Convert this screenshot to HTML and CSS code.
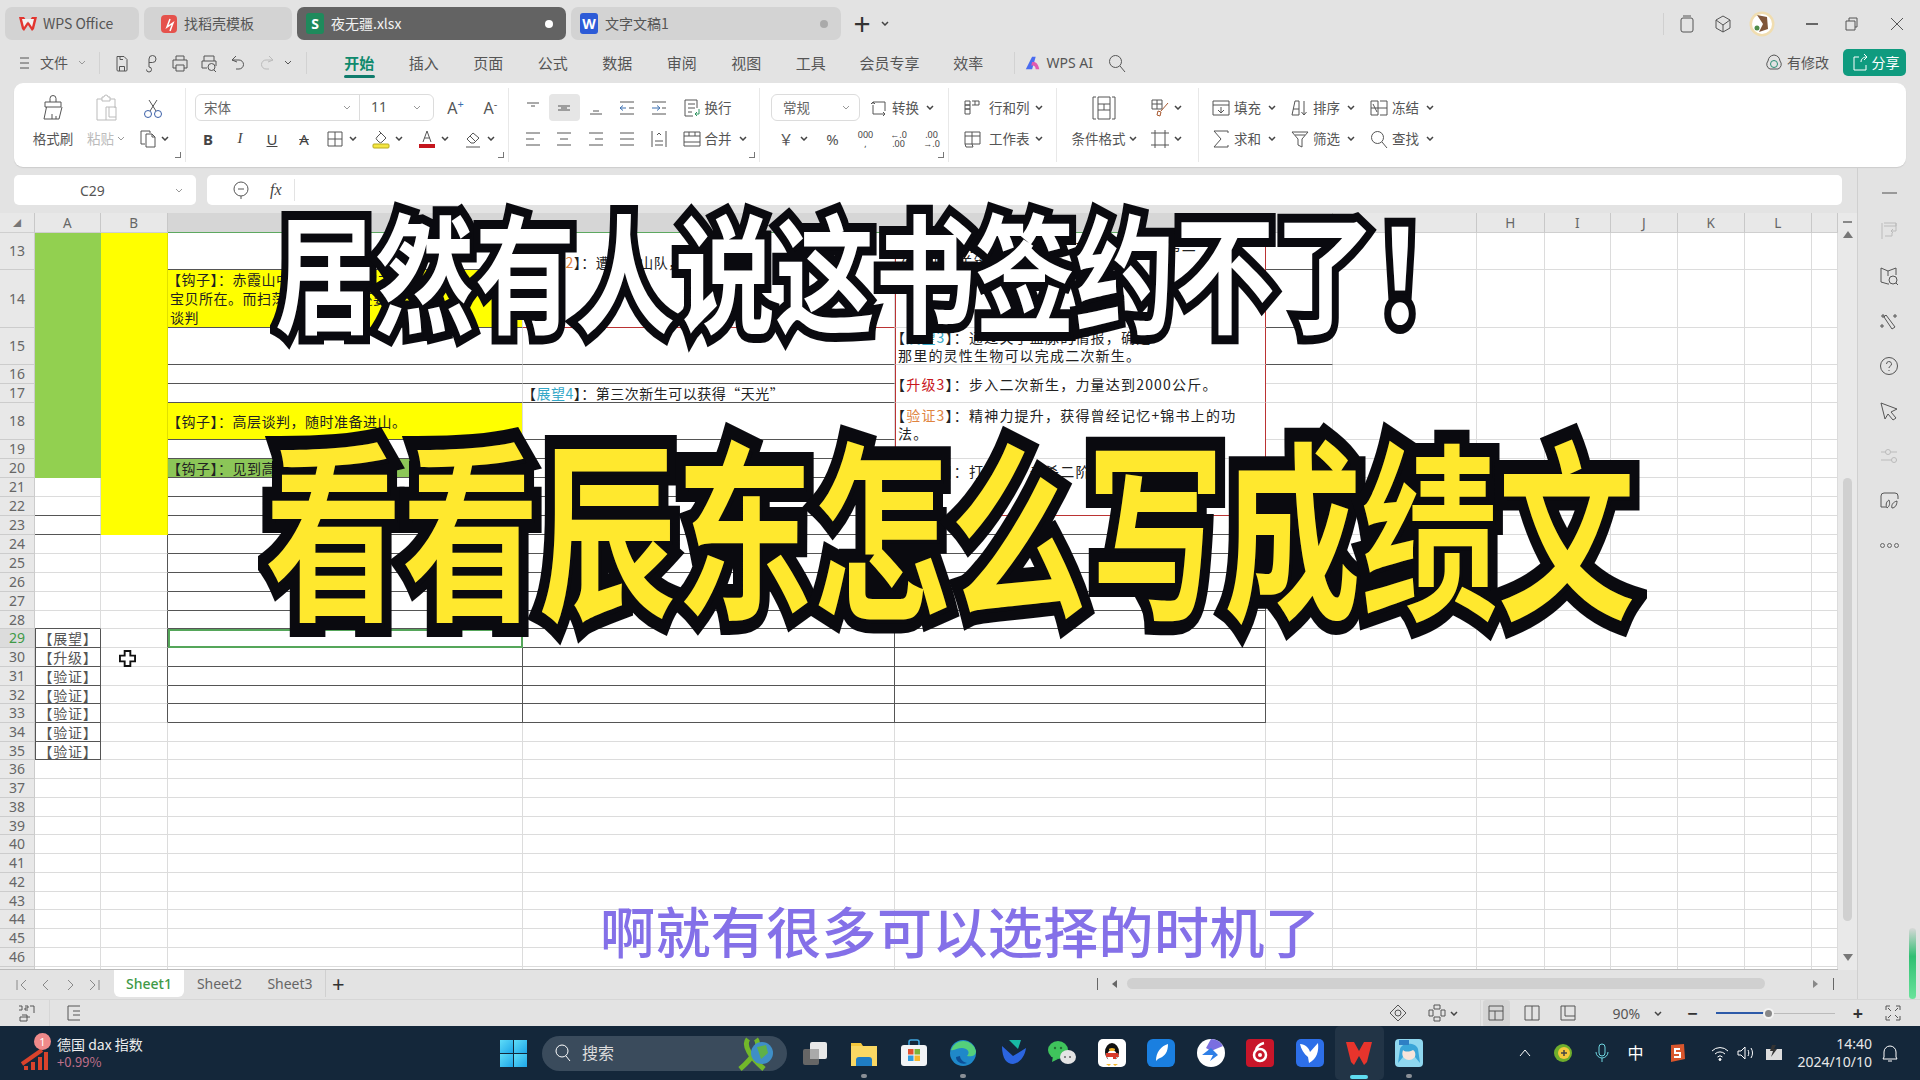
FILE: index.html
```html
<!DOCTYPE html>
<html lang="zh-CN">
<head>
<meta charset="utf-8">
<title>夜无疆.xlsx - WPS Office</title>
<link rel="stylesheet" href="styles.css">
</head>
<body>
<svg class="defs" aria-hidden="true">
<symbol id="ch" viewBox="0 0 8 5"><path d="M1 1l3 3 3-3"/></symbol>
<symbol id="save" viewBox="0 0 20 20"><path d="M5 3.500h7l3 3v10.500a1 1 0 0 1-1 1H6a1 1 0 0 1-1-1zM7.500 18v-4.500h5V18M8 3.500v3h3"/></symbol>
<symbol id="export" viewBox="0 0 20 20"><path d="M8 14V6a3.500 3.500 0 1 1 3.500 3.500H8M8 14a2.500 2.500 0 1 1-2.500 2.500"/></symbol>
<symbol id="print" viewBox="0 0 20 20"><path d="M6 7V3h8v4M3 7h14v8h-3M6 15H3V7M6 12h8v6H6z"/></symbol>
<symbol id="preview" viewBox="0 0 20 20"><path d="M5 8V3h10v5M3 8h14v5M3 8v7h5"/><circle cx="12.500" cy="14" r="3.500"/><path d="M15 17l2 2"/></symbol>
<symbol id="undo" viewBox="0 0 20 20"><path d="M4 7l4-4M4 7l5 2M4 7h7a4.500 4.500 0 0 1 0 9H8"/></symbol>
<symbol id="redo" viewBox="0 0 20 20"><path d="M16 7l-4-4M16 7l-5 2M16 7H9a4.500 4.500 0 0 0 0 9h3"/></symbol>
<symbol id="brush" viewBox="0 0 28 28"><path d="M11 8V4.500a3 3 0 0 1 6 0V8M6 8h16v5H6zM7.500 13L5 25h15l3-12M13 25v-5M17 25v-3"/></symbol>
<symbol id="paste" viewBox="0 0 28 28"><path d="M10 5H5v21h9M18 5h5v9M10 5V3h2a2 2 0 0 1 4 0h2v4h-8zM14 13h10v13H14zM17 13v10h7"/></symbol>
<symbol id="cut" viewBox="0 0 22 22"><circle cx="6" cy="17" r="3.500" stroke="#3a5fa8"/><circle cx="16" cy="17" r="3.500" stroke="#3a5fa8"/><path d="M8 14L15 3M14 14L7 3"/></symbol>
<symbol id="copy" viewBox="0 0 20 20"><path d="M12 4V2H3v13h4M8 5h6l3 3v10H8zM14 5v3h3"/></symbol>
<symbol id="border" viewBox="0 0 20 20"><path d="M3 3h14v14H3zM10 3v14M3 10h14"/></symbol>
<symbol id="fill" viewBox="0 0 20 20"><path d="M6 8l4-4 5 5-4 4a2 2 0 0 1-3 0l-2-2a2 2 0 0 1 0-3zM8 2l2 2"/><rect x="2" y="15" width="16" height="4" rx="1" fill="#f5e642" stroke="#b8ab20"/></symbol>
<symbol id="color" viewBox="0 0 20 20"><path d="M6 13l4-11 4 11M7.500 9h5"/><rect x="2" y="15" width="16" height="4" fill="#c5161d" stroke="none"/></symbol>
<symbol id="erase" viewBox="0 0 20 20"><path d="M4 10l6-6 6 5-5 5H8zM7 7l5 5M3 18h14"/></symbol>
<symbol id="a1" viewBox="0 0 20 20"><path d="M4 5h12M8 8h4"/></symbol>
<symbol id="a2" viewBox="0 0 20 20"><path d="M4 8h12M4 12h12M7 10h6"/></symbol>
<symbol id="a3" viewBox="0 0 20 20"><path d="M4 16h12M7 13h6"/></symbol>
<symbol id="a4" viewBox="0 0 20 20"><path d="M3 4h14M3 16h14M12 10h5"/><path d="M3 10h6M6 7.500L3 10l3 2.500" stroke="#3a6fb0"/></symbol>
<symbol id="a5" viewBox="0 0 20 20"><path d="M3 4h14M3 16h14M13 10h4"/><path d="M3 10h7M8 7.500l3 2.500-3 2.500" stroke="#3a6fb0"/></symbol>
<symbol id="wrap" viewBox="0 0 20 20"><path d="M15 10V2H3v16h8M6 6h7M6 10h7M6 14h4"/><path d="M17 11v5h-4M15 14l-2 2 2 2" stroke="#2f9460"/></symbol>
<symbol id="l1" viewBox="0 0 20 20"><path d="M3 4h14M3 10h8M3 16h14"/></symbol>
<symbol id="l2" viewBox="0 0 20 20"><path d="M3 4h14M6 10h8M3 16h14"/></symbol>
<symbol id="l3" viewBox="0 0 20 20"><path d="M3 4h14M9 10h8M3 16h14"/></symbol>
<symbol id="l4" viewBox="0 0 20 20"><path d="M3 4h14M3 10h14M3 16h14"/></symbol>
<symbol id="l5" viewBox="0 0 20 20"><path d="M3 2v16M17 2v16M6 12h8M6 16h8M8 6l2-2 2 2" /></symbol>
<symbol id="merge" viewBox="0 0 20 20"><path d="M2 3h16v14H2zM2 7h16M2 13h16M7 3v4M13 3v4"/></symbol>
<symbol id="conv" viewBox="0 0 20 20"><path d="M4 6V4h12v9M4 7v9h12M2 6l2-2 2 2" /><path d="M14 14l2 2-2 2" /></symbol>
<symbol id="rc" viewBox="0 0 20 20"><path d="M3 3h5v4H3zM3 7h5v4H3zM3 11h5v5H3zM10 3h7v4h-7M13 3v4"/></symbol>
<symbol id="ws" viewBox="0 0 20 20"><path d="M3 3h15v12H3zM3 7h15M10 3v12M3 15l1 3h7l-1-3" /></symbol>
<symbol id="cf" viewBox="0 0 28 28"><path d="M6 3H3v22h3M22 3h3v22h-3M8 3h12v22H8zM8 10h12M8 16h12M14 10v6"/></symbol>
<symbol id="cs" viewBox="0 0 20 20"><path d="M2 2h10v9H2zM7 2v9M2 6h10"/><path d="M18 5l-7 8M8 13l3 1-1 4-3-1z" stroke="#a8582f"/></symbol>
<symbol id="frm" viewBox="0 0 20 20"><path d="M5 1v18M15 1v18M1 4h18M1 16h18"/></symbol>
<symbol id="fl" viewBox="0 0 20 20"><path d="M2 3h16v14H2zM2 7h16M10 9v6M7 12l3 3 3-3"/></symbol>
<symbol id="sort" viewBox="0 0 20 20"><path d="M2 17L5 3h4v14zM3 11h6M14 3v14M11.500 14l2.500 3 2.500-3" /></symbol>
<symbol id="frz" viewBox="0 0 20 20"><path d="M2 3h7v14H2zM11 3h7v14h-7M2 10h16M4 6l4 8"/></symbol>
<symbol id="sum" viewBox="0 0 20 20"><path d="M17 4V2H3l7 8-7 8h14v-2"/></symbol>
<symbol id="flt" viewBox="0 0 20 20"><path d="M2 3h16l-6 7v8l-4-2v-6zM5 6h10"/></symbol>
<symbol id="find" viewBox="0 0 20 20"><circle cx="8.500" cy="8.500" r="6"/><path d="M13 13l5 6"/></symbol>
<symbol id="zoomf" viewBox="0 0 20 20"><circle cx="10" cy="9" r="7"/><path d="M7 9h6M10 16v3"/></symbol>
<symbol id="gr" viewBox="0 0 22 22"><path d="M4 3v16M6 6h12v-3M6 3h12M18 3v8h-5M15 9l-2 2 2 2M7 16h7v-3"/></symbol>
<symbol id="bk" viewBox="0 0 22 22"><path d="M3 3l7 3 8-3v7M3 3v14l7 2h1M10 6v5"/><circle cx="15" cy="15" r="4"/><path d="M18 18l2 2"/></symbol>
<symbol id="wnd" viewBox="0 0 22 22"><path d="M8 5l9 12-3 2L6 7zM5 4v4M3 6h4M17 4v4M15 6h4M4 14v4M2 16h4"/></symbol>
<symbol id="hlp" viewBox="0 0 22 22"><circle cx="11" cy="11" r="8.500"/><path d="M8.500 9a2.500 2.500 0 1 1 3.500 2.300c-.7.400-1 .8-1 1.700M11 15v1"/></symbol>
<symbol id="ptr" viewBox="0 0 22 22"><path d="M3 3l16 6-6 3 5 6-3 2-5-6-3 5z"/></symbol>
<symbol id="sld" viewBox="0 0 22 22"><path d="M3 7h5M13 7h6M3 15h11M19 15h-1"/><circle cx="10" cy="7" r="2.500"/><circle cx="16" cy="15" r="2.500"/></symbol>
<symbol id="eco" viewBox="0 0 22 22"><path d="M3 9V6a3 3 0 0 1 3-3h11a3 3 0 0 1 3 3v3M3 9v8h5M9 18c-2-4 0-7 2-8 1 3 1 6-2 8zM14 18c-1-3 1-6 5-7 0 4-2 7-5 7z"/></symbol>
<symbol id="eye" viewBox="0 0 20 20"><path d="M10 2l8 8-8 8-8-8z"/><circle cx="10" cy="10" r="3"/></symbol>
<symbol id="cross" viewBox="0 0 20 20"><path d="M7 2h6v4H7zM7 14h6v4H7zM2 7h4v6H2zM14 7h4v6h-4z"/></symbol>
<symbol id="v1" viewBox="0 0 20 20"><path d="M3 3h14v14H3zM3 8h14M9 8v9"/></symbol>
<symbol id="v2" viewBox="0 0 20 20"><path d="M3 3h14v14H3zM10 3v14"/></symbol>
<symbol id="v3" viewBox="0 0 20 20"><path d="M3 3h14v14H3zM7 3v10h10"/></symbol>
<symbol id="full" viewBox="0 0 20 20"><path d="M3 7V3h4M13 3h4v4M17 13v4h-4M7 17H3v-4M5 5l3 3M15 5l-3 3M5 15l3-3M15 15l-3-3"/></symbol>
<symbol id="js" viewBox="0 0 20 20"><path d="M5 12h5v6H3v-4h10M13 3h4v7M2 3h3v4H2M8 3h3v2H8v2h3"/></symbol>
<symbol id="pg" viewBox="0 0 20 20"><path d="M16 3H4v14h12M9 8h7M9 12h7"/></symbol>
<symbol id="cube" viewBox="0 0 20 20"><path d="M10 2l7 4v8l-7 4-7-4V6zM3 6l7 5 7-5M10 11v7"/></symbol>
<symbol id="copyw" viewBox="0 0 20 20"><rect x="4" y="4" width="12" height="14" rx="2"/><path d="M6 2h8"/></symbol>
</svg>

<div class="tabs">
  <div class="tab t1"><svg class="ti" viewBox="0 0 20 20"><path d="M1 3h5l4 6 4-6h5l-3 12-2 2-4-6-4 6-2-2z" fill="#e2352f"/><path d="M4 5l2 8 4-6 4 6 2-8z" fill="#f2f2f2"/></svg><span>WPS Office</span></div>
  <div class="tab t2"><svg class="ti" viewBox="0 0 20 20"><rect x="2" y="1" width="16" height="18" rx="4" fill="#e5524c"/><path d="M11 5l-3 8 6-4-3 8" fill="none" stroke="#fff" stroke-width="1.500"/></svg><span>找稻壳模板</span></div>
  <div class="tab t3 on"><b class="badge sx">S</b><span>夜无疆.xlsx</span><i class="dot"></i></div>
  <div class="tab t4"><b class="badge wd">W</b><span>文字文稿1</span><i class="dot dim"></i></div>
  <div class="plus">+</div>
  <svg class="ch dark tabch"><use href="#ch"/></svg>
  <div class="winbtns">
    <i class="wdiv"></i>
    <svg class="ic w20"><use href="#copyw"/></svg>
    <svg class="ic w20"><use href="#cube"/></svg>
    <svg class="avatar" viewBox="0 0 26 26"><circle cx="13" cy="13" r="12.500" fill="#f0ddb0"/><circle cx="13" cy="13" r="10" fill="#fff"/><path d="M8 4l6 9-4 8 9-3-1-12z" fill="#80563a"/><circle cx="8" cy="17" r="2.500" fill="#4d8c4a"/></svg>
    <span class="min"></span>
    <svg class="ic w16 rst" viewBox="0 0 16 16"><path d="M3 5h9v9H3zM6 5V2h8v9h-2"/></svg>
    <svg class="ic w16 cls" viewBox="0 0 16 16"><path d="M2 2l12 12M14 2L2 14"/></svg>
  </div>
</div>

<div class="menu">
  <svg class="ic burger" viewBox="0 0 14 14"><path d="M3 2h9M3 7h9M3 12h9"/></svg>
  <span class="file">文件</span><svg class="ch file-ch"><use href="#ch"/></svg>
  <i class="vdiv d1"></i>
  <div class="qbar">
    <svg class="ic w20"><use href="#save"/></svg>
    <svg class="ic w20"><use href="#export"/></svg>
    <svg class="ic w20"><use href="#print"/></svg>
    <svg class="ic w20"><use href="#preview"/></svg>
    <svg class="ic w20"><use href="#undo"/></svg>
    <svg class="ic w20 off"><use href="#redo"/></svg>
    <svg class="ch qch"><use href="#ch"/></svg>
  </div>
  <i class="vdiv d2"></i>
  <a class="mi on">开始</a><a class="mi">插入</a><a class="mi">页面</a><a class="mi">公式</a><a class="mi">数据</a><a class="mi">审阅</a><a class="mi">视图</a><a class="mi">工具</a><a class="mi wide">会员专享</a><a class="mi">效率</a>
  <i class="vdiv d3"></i>
  <svg class="ailogo" viewBox="0 0 20 20"><path d="M2 17L9 3h4l-4 14z" fill="#4a6cf0"/><path d="M9 9c4-1 7 2 8 8h-4c0-3-2-5-5-4z" fill="#e05ab0"/></svg>
  <span class="ai">WPS AI</span>
  <svg class="ic w20 ais"><use href="#find"/></svg>
  <div class="mright">
    <svg class="ic w20" viewBox="0 0 20 20"><path d="M6 16a5 5 0 0 1-2-8 7 7 0 0 1 6-6 7 7 0 0 1 6 6 5 5 0 0 1-2 8z"/><circle cx="10" cy="11" r="3.500" stroke="#2a8f74"/></svg>
    <span class="chg">有修改</span>
    <div class="share"><svg class="ic w20 wh" viewBox="0 0 20 20"><path d="M9 4H4v13h12v-5M11 9c0-3 2-5 6-5M14 1l3 3-3 3"/></svg><span>分享</span></div>
  </div>
</div>

<div class="ribbon">
  <div class="g g1">
    <div class="gclip"><svg class="ic w28"><use href="#brush"/></svg></div>
    <div class="gclip"><svg class="ic w28 off"><use href="#paste"/></svg></div>
    <div class="gclip"><svg class="ic w22"><use href="#cut"/></svg></div>
    <div class="gclip lb">格式刷</div>
    <div class="gclip lb off">粘贴<svg class="ch"><use href="#ch"/></svg></div>
    <div class="gclip"><svg class="ic w20"><use href="#copy"/></svg><svg class="ch dark"><use href="#ch"/></svg></div>
    <i class="launch"></i>
  </div>
  <div class="g g2">
    <div class="rr r2a">
      <div class="fontbox"><span class="fname">宋体</span><svg class="ch"><use href="#ch"/></svg><i></i><span class="fsize">11</span><svg class="ch"><use href="#ch"/></svg></div>
      <span class="grow">A<sup class="blue">+</sup></span><span class="grow shr">A<sup class="blue">-</sup></span>
    </div>
    <div class="rr r2b">
      <span class="t32 tb">B</span><span class="t32 ti2">I</span><span class="t32 tu">U</span><span class="t32 ts">A</span>
      <span class="tc"><svg class="ic w20"><use href="#border"/></svg><svg class="ch dark"><use href="#ch"/></svg></span>
      <span class="tc"><svg class="ic w20"><use href="#fill"/></svg><svg class="ch dark"><use href="#ch"/></svg></span>
      <span class="tc"><svg class="ic w20"><use href="#color"/></svg><svg class="ch dark"><use href="#ch"/></svg></span>
      <span class="tc"><svg class="ic w20"><use href="#erase"/></svg><svg class="ch dark"><use href="#ch"/></svg></span>
    </div>
    <i class="launch"></i>
  </div>
  <div class="g g3">
    <div class="rr">
      <span class="t31"><svg class="ic w20"><use href="#a1"/></svg></span><span class="t31 sel"><svg class="ic w20"><use href="#a2"/></svg></span><span class="t31"><svg class="ic w20"><use href="#a3"/></svg></span><span class="t31"><svg class="ic w20"><use href="#a4"/></svg></span><span class="t31"><svg class="ic w20"><use href="#a5"/></svg></span>
      <span class="tl"><svg class="ic w20"><use href="#wrap"/></svg>换行</span>
    </div>
    <div class="rr">
      <span class="t31"><svg class="ic w20"><use href="#l1"/></svg></span><span class="t31"><svg class="ic w20"><use href="#l2"/></svg></span><span class="t31"><svg class="ic w20"><use href="#l3"/></svg></span><span class="t31"><svg class="ic w20"><use href="#l4"/></svg></span><span class="t31"><svg class="ic w20"><use href="#l5"/></svg></span>
      <span class="tl"><svg class="ic w20"><use href="#merge"/></svg>合并<svg class="ch dark"><use href="#ch"/></svg></span>
    </div>
    <i class="launch"></i>
  </div>
  <div class="g g4">
    <div class="rr r4a">
      <div class="selbox"><span>常规</span><svg class="ch"><use href="#ch"/></svg></div>
      <span class="tl conv"><svg class="ic w20"><use href="#conv"/></svg>转换<svg class="ch dark"><use href="#ch"/></svg></span>
    </div>
    <div class="rr r4b">
      <span class="tc yen"><span class="glyph">￥</span><svg class="ch dark"><use href="#ch"/></svg></span>
      <span class="t33 pct">%</span>
      <span class="t33 nb"><small>000</small><small>,</small></span>
      <span class="t33 nb"><small>←.0</small><small>.00</small></span>
      <span class="t33 nb"><small>.00</small><small>→.0</small></span>
    </div>
    <i class="launch"></i>
  </div>
  <div class="g g5">
    <div class="rr"><span class="tl"><svg class="ic w20"><use href="#rc"/></svg>行和列<svg class="ch dark"><use href="#ch"/></svg></span></div>
    <div class="rr"><span class="tl"><svg class="ic w20"><use href="#ws"/></svg>工作表<svg class="ch dark"><use href="#ch"/></svg></span></div>
  </div>
  <div class="g g6">
    <div class="gclip"><svg class="ic w28"><use href="#cf"/></svg></div>
    <div class="gclip"><svg class="ic w20"><use href="#cs"/></svg><svg class="ch dark"><use href="#ch"/></svg></div>
    <div class="gclip lb">条件格式<svg class="ch dark"><use href="#ch"/></svg></div>
    <div class="gclip"><svg class="ic w20"><use href="#frm"/></svg><svg class="ch dark"><use href="#ch"/></svg></div>
  </div>
  <div class="g g7">
    <span class="tl"><svg class="ic w20"><use href="#fl"/></svg>填充<svg class="ch dark"><use href="#ch"/></svg></span>
    <span class="tl"><svg class="ic w20"><use href="#sort"/></svg>排序<svg class="ch dark"><use href="#ch"/></svg></span>
    <span class="tl"><svg class="ic w20"><use href="#frz"/></svg>冻结<svg class="ch dark"><use href="#ch"/></svg></span>
    <span class="tl"><svg class="ic w20"><use href="#sum"/></svg>求和<svg class="ch dark"><use href="#ch"/></svg></span>
    <span class="tl"><svg class="ic w20"><use href="#flt"/></svg>筛选<svg class="ch dark"><use href="#ch"/></svg></span>
    <span class="tl"><svg class="ic w20"><use href="#find"/></svg>查找<svg class="ch dark"><use href="#ch"/></svg></span>
  </div>
</div>

<div class="work">
  <div class="left">
    <div class="formula">
      <div class="namebox"><span>C29</span><svg class="ch"><use href="#ch"/></svg></div>
      <div class="fbar"><svg class="ic w20"><use href="#zoomf"/></svg><em>fx</em><i></i></div>
    </div>
    <div class="sheetrow">
      <div class="sheet">
        <table>
          <colgroup><col class="c0"><col class="ca"><col class="cb"><col class="cc"><col class="cd"><col class="ce"><col class="cf"><col class="cg"><col class="ch1"><col class="ci"><col class="cj"><col class="ck"><col class="cl"><col class="cm"></colgroup>
          <thead><tr class="hd"><th class="corner">◢</th><th>A</th><th>B</th><th class="hsel"></th><th class="hsel"></th><th class="hsel"></th><th></th><th>G</th><th>H</th><th>I</th><th>J</th><th>K</th><th>L</th><th></th></tr></thead>
          <tbody>
            <tr class="h37"><th>13</th><td class="grn" rowspan="8"></td><td class="yel" rowspan="11"></td><td class="k"></td><td class="rs2 k" rowspan="2"><div class="mid">【展望<span class="or">2</span>】：遭遇巡山队，得到协助，</div></td><td class="rbx topt" rowspan="2">【<span class="bl">展望2</span>】：获得重大线索，大力主角成为第二<br>次新生的关键。</td><td class="k"></td><td></td><td></td><td></td><td></td><td></td><td></td><td></td></tr>
            <tr class="h58"><th>14</th><td class="yl k ml">【钩子】：赤霞山中藏有其他至宝之<br>宝贝所在。而扫荡山林的人类还要<br>谈判</td><td class="k"></td><td></td><td></td><td></td><td></td><td></td><td></td><td></td></tr>
            <tr class="h37"><th>15</th><td class="k"></td><td class="k"></td><td class="rbx ml2">【<span class="bl">展望3</span>】：通过关于血脉的情报，确定<br>那里的灵性生物可以完成二次新生。</td><td class="k"></td><td></td><td></td><td></td><td></td><td></td><td></td><td></td></tr>
            <tr><th>16</th><td class="k"></td><td class="k"></td><td class="rbx" rowspan="2">【<span class="rd">升级3</span>】：步入二次新生，力量达到2000公斤。</td><td></td><td></td><td></td><td></td><td></td><td></td><td></td><td></td></tr>
            <tr><th>17</th><td class="k"></td><td class="k">【<span class="bl">展望4</span>】：第三次新生可以获得“天光”</td><td></td><td></td><td></td><td></td><td></td><td></td><td></td><td></td></tr>
            <tr class="h37"><th>18</th><td class="yl k">【钩子】：高层谈判，随时准备进山。</td><td class="k"></td><td class="rbx topt2" rowspan="2">【<span class="or">验证3</span>】：精神力提升，获得曾经记忆+锦书上的功<br>法。</td><td></td><td></td><td></td><td></td><td></td><td></td><td></td><td></td></tr>
            <tr><th>19</th><td class="k"></td><td class="k"></td><td></td><td></td><td></td><td></td><td></td><td></td><td></td><td></td></tr>
            <tr><th>20</th><td class="gr2 k">【钩子】：见到高层，展开谈判。</td><td class="k"></td><td class="rbx rbot topt2" rowspan="3">【<span class="or">验证3</span>】：打击中，击杀二阶生物。</td><td></td><td></td><td></td><td></td><td></td><td></td><td></td><td></td></tr>
            <tr><th>21</th><td></td><td class="k"></td><td class="k"></td><td></td><td></td><td></td><td></td><td></td><td></td><td></td><td></td></tr>
            <tr><th>22</th><td class="k"></td><td class="k"></td><td class="k"></td><td></td><td></td><td></td><td></td><td></td><td></td><td></td><td></td></tr>
            <tr><th>23</th><td class="k"></td><td class="k"></td><td class="k"></td><td class="k"></td><td></td><td></td><td></td><td></td><td></td><td></td><td></td><td></td></tr>
            <tr><th>24</th><td></td><td class="kr"></td><td class="k kr"></td><td class="k kr"></td><td class="k kr"></td><td></td><td></td><td></td><td></td><td></td><td></td><td></td><td></td></tr>
            <tr><th>25</th><td></td><td class="kr"></td><td class="k kr"></td><td class="k kr"></td><td class="k kr"></td><td></td><td></td><td></td><td></td><td></td><td></td><td></td><td></td></tr>
            <tr><th>26</th><td></td><td class="kr"></td><td class="k kr"></td><td class="k kr"></td><td class="k kr"></td><td></td><td></td><td></td><td></td><td></td><td></td><td></td><td></td></tr>
            <tr><th>27</th><td></td><td class="kr"></td><td class="k kr"></td><td class="k kr"></td><td class="k kr"></td><td></td><td></td><td></td><td></td><td></td><td></td><td></td><td></td></tr>
            <tr class="s18"><th>28</th><td class="k"></td><td class="kr"></td><td class="k kr"></td><td class="k kr"></td><td class="k kr"></td><td></td><td></td><td></td><td></td><td></td><td></td><td></td><td></td></tr>
            <tr><th class="rsel">29</th><td class="lab">【展望】</td><td class="kr"></td><td class="k kr cur"></td><td class="k kr"></td><td class="k kr"></td><td></td><td></td><td></td><td></td><td></td><td></td><td></td><td></td></tr>
            <tr><th>30</th><td class="lab">【升级】</td><td class="kr"></td><td class="k kr"></td><td class="k kr"></td><td class="k kr"></td><td></td><td></td><td></td><td></td><td></td><td></td><td></td><td></td></tr>
            <tr><th>31</th><td class="lab">【验证】</td><td class="kr"></td><td class="k kr"></td><td class="k kr"></td><td class="k kr"></td><td></td><td></td><td></td><td></td><td></td><td></td><td></td><td></td></tr>
            <tr class="s18"><th>32</th><td class="lab">【验证】</td><td class="kr"></td><td class="k kr"></td><td class="k kr"></td><td class="k kr"></td><td></td><td></td><td></td><td></td><td></td><td></td><td></td><td></td></tr>
            <tr><th>33</th><td class="lab">【验证】</td><td class="kr"></td><td class="k kr"></td><td class="k kr"></td><td class="k kr"></td><td></td><td></td><td></td><td></td><td></td><td></td><td></td><td></td></tr>
            <tr><th>34</th><td class="lab">【验证】</td><td></td><td></td><td></td><td></td><td></td><td></td><td></td><td></td><td></td><td></td><td></td><td></td></tr>
            <tr class="s18"><th>35</th><td class="lab">【验证】</td><td></td><td></td><td></td><td></td><td></td><td></td><td></td><td></td><td></td><td></td><td></td><td></td></tr>
            <tr><th>36</th><td></td><td></td><td></td><td></td><td></td><td></td><td></td><td></td><td></td><td></td><td></td><td></td><td></td></tr>
            <tr><th>37</th><td></td><td></td><td></td><td></td><td></td><td></td><td></td><td></td><td></td><td></td><td></td><td></td><td></td></tr>
            <tr><th>38</th><td></td><td></td><td></td><td></td><td></td><td></td><td></td><td></td><td></td><td></td><td></td><td></td><td></td></tr>
            <tr class="s18"><th>39</th><td></td><td></td><td></td><td></td><td></td><td></td><td></td><td></td><td></td><td></td><td></td><td></td><td></td></tr>
            <tr><th>40</th><td></td><td></td><td></td><td></td><td></td><td></td><td></td><td></td><td></td><td></td><td></td><td></td><td></td></tr>
            <tr><th>41</th><td></td><td></td><td></td><td></td><td></td><td></td><td></td><td></td><td></td><td></td><td></td><td></td><td></td></tr>
            <tr><th>42</th><td></td><td></td><td></td><td></td><td></td><td></td><td></td><td></td><td></td><td></td><td></td><td></td><td></td></tr>
            <tr class="s18"><th>43</th><td></td><td></td><td></td><td></td><td></td><td></td><td></td><td></td><td></td><td></td><td></td><td></td><td></td></tr>
            <tr><th>44</th><td></td><td></td><td></td><td></td><td></td><td></td><td></td><td></td><td></td><td></td><td></td><td></td><td></td></tr>
            <tr><th>45</th><td></td><td></td><td></td><td></td><td></td><td></td><td></td><td></td><td></td><td></td><td></td><td></td><td></td></tr>
            <tr><th>46</th><td></td><td></td><td></td><td></td><td></td><td></td><td></td><td></td><td></td><td></td><td></td><td></td><td></td></tr>
            <tr><th></th><td></td><td></td><td></td><td></td><td></td><td></td><td></td><td></td><td></td><td></td><td></td><td></td><td></td></tr>
          </tbody>
        </table>
      </div>
      <div class="vscroll">
        <i class="vmin"></i>
        <i class="up"></i>
        <i class="vthumb"></i>
        <i class="down"></i>
      </div>
    </div>
    <div class="sheetbar">
      <div class="nav">
        <svg class="ic w14 off2" viewBox="0 0 14 14"><path d="M2 2v10M11 2L6 7l5 5"/></svg>
        <svg class="ic w14 off2" viewBox="0 0 14 14"><path d="M9 2L4 7l5 5"/></svg>
        <svg class="ic w14 off2" viewBox="0 0 14 14"><path d="M5 2l5 5-5 5"/></svg>
        <svg class="ic w14 off2" viewBox="0 0 14 14"><path d="M12 2v10M3 2l5 5-5 5"/></svg>
      </div>
      <div class="stab on">Sheet1</div><div class="stab">Sheet2</div><div class="stab last">Sheet3</div><div class="addsheet">+</div>
      <div class="hscroll"><i class="bar"></i><i class="tl-l"></i><i class="hthumb"></i><i class="tl-r"></i><i class="bar"></i></div>
    </div>
  </div>
  <div class="side">
    <i class="sdash"></i>
    <span class="si"><svg class="ic w22 off"><use href="#gr"/></svg></span>
    <span class="si"><svg class="ic w22"><use href="#bk"/></svg></span>
    <span class="si"><svg class="ic w22"><use href="#wnd"/></svg></span>
    <span class="si"><svg class="ic w22"><use href="#hlp"/></svg></span>
    <span class="si"><svg class="ic w22"><use href="#ptr"/></svg></span>
    <span class="si"><svg class="ic w22 off"><use href="#sld"/></svg></span>
    <span class="si"><svg class="ic w22"><use href="#eco"/></svg></span>
    <span class="si dots"><i></i><i></i><i></i></span>
    <i class="gbar"></i>
  </div>
</div>

<div class="status">
  <svg class="ic w20 st1"><use href="#js"/></svg>
  <i class="sep"></i>
  <svg class="ic w20 st2"><use href="#pg"/></svg>
  <div class="sright">
    <svg class="ic w20"><use href="#eye"/></svg>
    <svg class="ic w20 cr"><use href="#cross"/></svg><svg class="ch dark crc"><use href="#ch"/></svg>
    <i class="sep sep2"></i>
    <span class="vb act"><svg class="ic w20"><use href="#v1"/></svg></span>
    <span class="vb"><svg class="ic w20"><use href="#v2"/></svg></span>
    <span class="vb"><svg class="ic w20"><use href="#v3"/></svg></span>
    <span class="pctz">90%</span><svg class="ch dark pch"><use href="#ch"/></svg>
    <b class="zm">−</b>
    <div class="slider"><i class="sfill"></i><i class="sknob"></i></div>
    <b class="zp">+</b>
    <svg class="ic w20 fs"><use href="#full"/></svg>
  </div>
</div>

<div class="taskbar">
  <div class="stock">
    <svg class="sic" viewBox="0 0 30 30"><path d="M2 22L22 8" stroke="#d9432c" stroke-width="4" fill="none"/><rect x="4" y="24" width="4" height="4" fill="#d9432c"/><rect x="11" y="20" width="4" height="8" fill="#d9432c"/><rect x="18" y="15" width="4" height="13" fill="#d9432c"/><rect x="24" y="10" width="4" height="18" fill="#d9432c"/></svg>
    <b class="sbadge">1</b>
    <div class="stxt"><span>德国 dax 指数</span><span class="pink">+0.99%</span></div>
  </div>
  <div class="winlogo"><i></i><i></i><i></i><i></i></div>
  <div class="search">
    <svg class="ic w20 wh" viewBox="0 0 20 20"><circle cx="9" cy="8" r="6"/><path d="M13 13l4 5"/></svg>
    <span>搜索</span>
    <svg class="rib" viewBox="0 0 50 36"><path d="M16 4c-5 6 2 18 16 30M24 4c5 6-2 18-16 30" stroke="#72b82a" stroke-width="5" fill="none"/><circle cx="30" cy="18" r="11" fill="#3f8fc7"/><path d="M25 12l9-2 2 8-7 6z" fill="#5fb04a"/></svg>
  </div>
  <div class="apps">
    <span class="app"><svg viewBox="0 0 28 28"><rect x="2" y="10" width="16" height="16" rx="2" fill="#666"/><rect x="9" y="3" width="17" height="17" rx="2" fill="#e8e8e8"/><rect x="9" y="10" width="9" height="10" fill="#aaa"/></svg></span>
    <span class="app pip"><svg viewBox="0 0 28 28"><path d="M1 4h10l2 3h14v20H1z" fill="#f5c83c"/><rect x="1" y="7" width="26" height="20" fill="#fad863"/><path d="M6 21a3 3 0 0 1 3-3h10a3 3 0 0 1 3 3v6H6z" fill="#1f7dc4"/></svg></span>
    <span class="app"><svg viewBox="0 0 28 28"><path d="M9 6V3a2 2 0 0 1 2-2h6a2 2 0 0 1 2 2v3" stroke="#3fa7e0" stroke-width="1.500" fill="none"/><rect x="1" y="6" width="26" height="21" rx="3" fill="#f2f4f6"/><rect x="8" y="10" width="5.500" height="5.500" fill="#e2502f"/><rect x="14.500" y="10" width="5.500" height="5.500" fill="#7bb338"/><rect x="8" y="16.500" width="5.500" height="5.500" fill="#2f9de0"/><rect x="14.500" y="16.500" width="5.500" height="5.500" fill="#f4b72b"/></svg></span>
    <span class="app pip"><svg viewBox="0 0 28 28"><circle cx="14" cy="14" r="13" fill="#1f88c9"/><path d="M2 11a13 13 0 0 1 25 1c0 5-5 6-9 5 4-4 0-8-5-8-5 0-8 3-11 2z" fill="#55cf7b"/><path d="M7 18c0 5 6 8 11 6-4-1-7-4-7-7z" fill="#0c4e96"/></svg></span>
    <span class="app"><svg viewBox="0 0 28 28"><path d="M10 1h12l-3 9z" fill="#18b9a5"/><path d="M3 7l11 10L27 9c-1 8-6 15-13 16C8 25 3 20 3 7z" fill="#2b65e0"/></svg></span>
    <span class="app"><svg viewBox="0 0 28 28"><ellipse cx="10" cy="11" rx="10" ry="9" fill="#3fc45c"/><path d="M5 17l-1 6 6-3z" fill="#3fc45c"/><ellipse cx="20" cy="18" rx="8" ry="7" fill="#e4e4e4"/><circle cx="17" cy="18" r="1" fill="#666"/><circle cx="22" cy="18" r="1" fill="#666"/><circle cx="7" cy="9" r="1.200" fill="#246f36"/><circle cx="13" cy="9" r="1.200" fill="#246f36"/></svg></span>
    <span class="app"><svg viewBox="0 0 28 28"><rect width="28" height="28" rx="5" fill="#fff"/><ellipse cx="14" cy="13" rx="7" ry="9" fill="#111"/><ellipse cx="14" cy="17" rx="5" ry="6" fill="#fff"/><path d="M8 14h12l1 4h-3v2h-3v-2H8z" fill="#d83a2a"/><ellipse cx="14" cy="10.500" rx="3" ry="1.500" fill="#f5b82a"/><path d="M8 25h5l-2 2zM15 25h5l-3 2z" fill="#f5b82a"/></svg></span>
    <span class="app"><svg viewBox="0 0 28 28"><rect width="28" height="28" rx="6" fill="#1a7fe0"/><path d="M9 22c0-9 5-15 12-17 0 8-3 12-8 14l-2 1z" fill="#fff"/></svg></span>
    <span class="app"><svg viewBox="0 0 28 28"><circle cx="14" cy="14" r="14" fill="#fff"/><path d="M14 0a14 14 0 0 1 12 7L14 12 9 9z" fill="#7a6fe0"/><path d="M5 16l9-7 7 7-8 6 3-6z" fill="#2e7fe6"/></svg></span>
    <span class="app"><svg viewBox="0 0 28 28"><rect width="28" height="28" rx="4" fill="#c8162a"/><circle cx="14" cy="16" r="6" fill="none" stroke="#fff" stroke-width="2.500"/><circle cx="14" cy="16" r="2" fill="#fff"/><path d="M18 4c-4 1-7 3-8 7" stroke="#fff" stroke-width="2.500" fill="none"/></svg></span>
    <span class="app"><svg viewBox="0 0 28 28"><rect width="28" height="28" rx="5" fill="#2d6fe8"/><path d="M4 5c5 0 9 4 10 8l8-9c1 8-1 16-9 20l-1-6C8 15 5 10 4 5z" fill="#fff"/></svg></span>
    <span class="app wps"><svg viewBox="0 0 28 28"><path d="M1 3h8l5 9 5-9h8l-5 20-3 3-5-9-5 9-3-3z" fill="#e8342c"/></svg><i></i></span>
    <span class="app pip"><svg viewBox="0 0 28 28"><rect width="28" height="28" rx="4" fill="#8fd7ef"/><circle cx="14" cy="14" r="7" fill="#f8e4da"/><path d="M5 10c2-7 16-7 18 0l2 14-5-6c1-3 0-6-2-7-4 2-8 2-10 0-1 3-1 5 0 7l-5 6z" fill="#3aa5d8"/><rect x="4" y="1" width="10" height="5" fill="#2f7fc4"/></svg></span>
  </div>
  <div class="tray">
    <svg class="ic w16 wh tup" viewBox="0 0 16 16"><path d="M3 11l5-6 5 6"/></svg>
    <svg class="tr" viewBox="0 0 20 20"><circle cx="10" cy="10" r="9" fill="#6fae2c"/><circle cx="11" cy="10" r="6" fill="#f5c83c"/><path d="M8 10h6M11 7v6" stroke="#444" stroke-width="1.500"/></svg>
    <svg class="ic tr mic" viewBox="0 0 20 20"><rect x="7" y="1" width="6" height="12" rx="3"/><path d="M4 9a6 6 0 0 0 12 0M10 15v4"/></svg>
    <span class="zh">中</span>
    <svg class="tr" viewBox="0 0 20 20"><path d="M4 2l13-1 1 15-14 3z" fill="#d9562c"/><path d="M13 6H8v4h5v4H7" stroke="#fff" stroke-width="2" fill="none"/></svg>
    <svg class="ic tr wh wifi" viewBox="0 0 20 20"><path d="M2 8a11 11 0 0 1 16 0M5 11a7 7 0 0 1 10 0M7.500 14a3.500 3.500 0 0 1 5 0"/><circle cx="10" cy="16.500" r="1" fill="#fff"/></svg>
    <svg class="ic tr wh spk" viewBox="0 0 20 20"><path d="M2 8v4h3l4 4V4L5 8zM12 7c1 2 1 4 0 6M15 5c2 3 2 7 0 10"/></svg>
    <svg class="ic tr wh bat" viewBox="0 0 20 20"><rect x="2" y="6" width="16" height="11" fill="#ddd"/><path d="M8 2l-2 6h3l-2 6 6-8h-3l2-4z" fill="#333"/></svg>
    <div class="clock"><span>14:40</span><span>2024/10/10</span></div>
    <svg class="ic w20 wh bell" viewBox="0 0 20 20"><path d="M4 14V9a6 6 0 0 1 12 0v5l1 2H3zM8 18h4"/></svg>
  </div>
</div>

<svg class="cursor" viewBox="0 0 18 18"><path d="M6 1h6v5h5v6h-5v5H6v-5H1V6h5z" fill="#fff" stroke="#111" stroke-width="2"/></svg>
<div class="title t-white">居然有人说这书签约不了！</div>
<div class="title t-yellow">看看辰东怎么写成绩文</div>
<div class="subtitle">啊就有很多可以选择的时机了</div>
</body>
</html>
```
FILE: styles.css
```css
*{box-sizing:border-box}
html,body{margin:0;padding:0}
body{position:relative;width:1920px;height:1080px;overflow:hidden;background:#e3e3e3;color:#555;font:14px/1.2 "Noto Sans CJK SC","Noto Sans",sans-serif;display:flex;flex-direction:column}
i,em,b{font-style:normal}
svg{display:block;flex:none}
.defs{position:absolute;width:0;height:0}
.ic{fill:none;stroke:#555;stroke-width:1}
.ch{width:8px;height:5px;fill:none;stroke:#999;stroke-width:1}
.ch.dark{stroke:#444;stroke-width:1.5}
.w14{width:14px;height:14px}.w16{width:16px;height:16px}.w20{width:20px;height:20px}.w22{width:22px;height:22px}.w28{width:28px;height:28px}
.off{color:#bbb;stroke:#bbb}
.off2{stroke:#888}
.wh{stroke:#fff}

/* tabs */
.tabs{height:42px;padding:7px 0 0 5px;display:flex;align-items:flex-start;gap:5px;flex:none}
.tab{height:33px;border-radius:7px;background:#d3d3d3;display:flex;align-items:center;font-size:14px;color:#555;position:relative}
.t1{width:134px;padding-left:13px}
.t2{width:148px;padding-left:15px}
.t3{width:269px;padding-left:9px}
.t4{width:270px;padding-left:9px}
.ti{width:20px;height:20px;margin-right:5px}
.tab.on{background:#636363;color:#f2f2f2}
.badge{width:18px;height:21px;border-radius:3px;color:#fff;font:700 14px "Noto Sans",sans-serif;display:flex;align-items:center;justify-content:center;margin-right:7px}
.sx{background:#1f8a5c}
.wd{background:#2d5bd7}
.dot{width:8px;height:8px;border-radius:50%;background:#fff;margin-left:auto;margin-right:13px}
.dot.dim{background:#aaa}
.plus{font:400 30px/33px "Noto Sans",sans-serif;color:#333;width:24px;margin-left:4px;text-align:center}
.tabch{margin:14px 0 0 2px}
.winbtns{margin-left:auto;display:flex;align-items:center;height:33px;padding-right:15px}
.wdiv{width:1px;height:22px;background:#d0d0d0;margin-right:13px}
.winbtns .w20:nth-of-type(2){margin-left:16px}
.avatar{width:26px;height:30px;margin-left:16px}
.min{width:12px;height:2px;background:#666;margin-left:31px}
.rst{margin-left:25px}
.cls{margin-left:30px}

/* menu */
.menu{height:41px;display:flex;align-items:center;flex:none}
.burger{width:14px;height:14px;margin-left:17px}
.file{margin-left:9px;font-size:14px}
.file-ch{margin-left:10px}
.vdiv{width:1px;height:22px;background:#d2d2d2}
.d1{margin-left:13px}
.qbar{display:flex;gap:9px;align-items:center;margin-left:12px}
.qch{margin-left:-2px;margin-right:-5px;stroke:#555}
.d2{margin-left:19px}
.mi{width:64.500px;text-align:center;font-size:15px;color:#555;position:relative;height:41px;line-height:41px;display:block}
.d2+.mi{margin-left:20px}
.mi.on{color:#0f8a6d;font-weight:700}
.mi.on::after{content:"";position:absolute;left:17px;right:17px;bottom:5px;height:3px;background:#0f7b6c;border-radius:2px}
.mi.wide{width:79px;margin-left:7px}
.mi.wide+.mi{margin-left:7px}
.d3{margin-left:13px}
.ailogo{width:18px;height:18px;margin-left:9px}
.ai{font:14px "Noto Sans",sans-serif;margin-left:5px}
.ais{margin-left:14px}
.mright{margin-left:auto;display:flex;align-items:center;padding-right:14px}
.chg{font-size:14px;margin-left:3px;margin-right:14px}
.share{width:63px;height:27px;border-radius:5px;background:#0f9b7f;color:#fff;display:flex;align-items:center;justify-content:center;gap:2px;font-size:14px}

/* ribbon */
.ribbon{height:84px;margin:0 14px;background:#fff;border-radius:9px;display:flex;flex:none;box-shadow:0 1px 1px #ccc;font-size:13.500px}
.g{position:relative;height:74px;margin-top:5px;border-right:1px solid #e8e8e8;padding-top:4px;flex:none}
.g1{width:172px;display:grid;grid-template-columns:78px 28px 66px;grid-auto-rows:31px}
.g2{width:323px}
.g3{width:251px;padding-left:8px}
.g4{width:189px}
.g5{width:108px;padding-left:13px}
.g6{width:142px;display:grid;grid-template-columns:88px 54px;grid-auto-rows:31px;padding-left:0}
.g7{flex:1;border:0;display:grid;grid-template-columns:79px 79px 79px;grid-auto-rows:31px;padding-left:12px}
.gclip{display:flex;align-items:center;justify-content:center;gap:3px;white-space:nowrap}
.gclip.lb{font-size:13.500px}
.lb.off{color:#bbb}
.g6 .gclip{padding-left:6px}
.g6 .gclip:nth-child(even){justify-content:flex-start;padding-left:5px;gap:4px}
.launch{position:absolute;right:4px;bottom:4px;width:6px;height:6px;border-right:1px solid #777;border-bottom:1px solid #777}
.rr{height:31px;display:flex;align-items:center}
.r2a{padding-left:9px}
.r2b{padding-left:6px}
.fontbox{width:239px;height:27px;border:1px solid #dcdcdc;border-radius:6px;display:flex;align-items:center;font-size:13.500px}
.fname{margin-left:8px;width:139px;color:#666}
.fontbox i{width:1px;height:27px;background:#dcdcdc;margin-left:8px}
.fsize{margin-left:11px;width:42px;font-family:"Noto Sans",sans-serif;font-size:14px}
.grow{width:33px;text-align:center;font:16px "Noto Sans",sans-serif;margin-left:2px;color:#555}
.grow:first-of-type{margin-left:5px}
.grow sup{font-size:11px;line-height:0}
.blue{color:#3a6fb0}
.shr sup{color:#555}
.t32{width:32px;text-align:center;font:15px "Noto Sans",sans-serif;color:#444}
.tb{font-weight:700}
.ti2{font-style:italic;font-family:"Liberation Serif",serif}
.tu{text-decoration:underline}
.ts{text-decoration:line-through}
.tc{display:flex;align-items:center;gap:4px;width:46px;padding-left:5px}
.t31{width:31.500px;height:27px;display:flex;align-items:center;justify-content:center;border-radius:4px}
.t31.sel{background:#e6e6e6}
.tl{display:flex;align-items:center;gap:3px;padding-left:7px;white-space:nowrap}
.tl .ch{margin-left:4px}
.g5 .tl{padding-left:0;gap:7px}
.g5 .tl .ch{margin-left:-2px}
.g7 .tl{padding-left:0}
.r4a{padding-left:11px}
.selbox{width:89px;height:27px;border:1px solid #dcdcdc;border-radius:6px;display:flex;align-items:center;justify-content:space-between;padding:0 9px 0 11px;color:#666}
.conv{padding-left:9px}
.r4b{padding-left:14px}
.yen{width:42px;padding-left:2px}
.glyph{width:20px;text-align:center;font-size:15px}
.t33{width:33px;text-align:center}
.pct{font:15px "Noto Sans",sans-serif;color:#555}
.nb{display:flex;flex-direction:column;align-items:center;line-height:9px}
.nb small{font:9px/9px "Noto Sans",sans-serif;color:#444}

/* work */
.work{flex:1;display:flex;min-height:0}
.left{width:1857px;display:flex;flex-direction:column}
.formula{height:46px;padding:8px 15px 8px 14px;display:flex;gap:11px;flex:none}
.namebox{width:182px;height:30px;background:#fff;border-radius:5px;display:flex;align-items:center;position:relative;font:14px "Noto Sans",sans-serif}
.namebox span{margin-left:66px;width:95px}
.fbar{flex:1;height:30px;background:#fff;border-radius:5px;display:flex;align-items:center;padding-left:24px}
.fbar em{font:italic 16px "Liberation Serif",serif;margin-left:19px;color:#444}
.fbar i{width:1px;height:22px;background:#e3e3e3;margin-left:12px}
.sheetrow{flex:1;display:flex;min-height:0}
.sheet{width:1838px;height:757px;overflow:hidden;background:#fff;border-bottom:1px solid #bbb}
table{table-layout:fixed;width:1838px;border-collapse:separate;border-spacing:0;font:14px/16px "Noto Sans CJK SC",sans-serif;color:#222;letter-spacing:.5px}
.c0{width:35px}.ca{width:66px}.cb{width:67px}.cc{width:355px}.cd{width:372px}.ce{width:371px}.cf{width:67px}.cg{width:144px}.ch1{width:68px}.ci{width:66px}.cj{width:67px}.ck{width:67px}.cl{width:67px}.cm{width:26px}
tr{height:19px}
tr.s18{height:18px}
tr.h37{height:37px}
tr.h58{height:58px}
tr.hd{height:20px}
td,th{padding:0;border-right:1px solid #dcdcdc;border-bottom:1px solid #dcdcdc;white-space:nowrap}
th{overflow:hidden}
thead th{background:#e8e8e8;color:#666;font:400 13.500px/16px "Noto Sans",sans-serif;border-bottom:1px solid #cfcfcf;border-right:1px solid #c8c8c8}
.hsel{background:#d6d6d6;border-bottom:1px solid #5da860;border-right:0}
.corner{font-size:8px;color:#777}
tbody th{background:#e8e8e8;color:#666;font:400 14px/16px "Noto Sans",sans-serif;border-right:1px solid #ccc;border-bottom:1px solid #ccc;letter-spacing:0}
.rsel{color:#3f9a47;background:#dcdcdc}
.grn{background:#92d050;border:0}
.yel{background:#ff0;border-right:1px solid #e0e000;border-bottom:0}
.k{border-bottom:1px solid #555}
.kr{border-right:1px solid #555}
td{padding-left:2px;text-indent:-3px}
.yl{background:#ff0}
.gr2{background:#8cc658}
.ml{white-space:normal;line-height:19px}
.ml2{white-space:normal;line-height:18px}
.mid{padding-bottom:36px}
.rs2{border-bottom:1px solid #b33}
.rbx{border-left:1px solid #b33;border-right:1px solid #b33;vertical-align:middle;letter-spacing:1.200px;text-indent:-7px}
.rbot{border-bottom:1px solid #b33}
.topt{vertical-align:top;padding-top:4px;line-height:16px}
.topt2{vertical-align:top;padding-top:3px;line-height:18px;white-space:normal}
.bl{color:#35a8c8}.rd{color:#c8161d}.or{color:#e0843f}
.lab{border:1px solid #555;border-width:0 1px 1px 1px;color:#555;text-align:center;letter-spacing:.8px;padding:0;text-indent:0}
.cur{outline:2px solid #55a65a;outline-offset:-2px}

/* scroll */
.vscroll{width:19px;background:#e9e9e9;display:flex;flex-direction:column;align-items:center}
.vmin{width:9px;height:2px;background:#888;margin-top:8px}
.up{margin-top:8px;border:5px solid transparent;border-top:0;border-bottom:7px solid #777}
.vthumb{width:9px;height:443px;background:#d0d0d0;border-radius:5px;margin-top:240px}
.down{margin-top:33px;border:5px solid transparent;border-bottom:0;border-top:7px solid #777}
.sheetbar{height:29px;display:flex;align-items:flex-start;flex:none;border-top:0}
.nav{display:flex;gap:10px;width:114px;padding:8px 0 0 15px}
.stab{height:27px;width:71px;text-align:center;font:14px/27px "Noto Sans",sans-serif;color:#666}
.stab.on{width:70px;background:#fff;color:#3f9a47;font-weight:500;border-radius:0 0 6px 6px}
.stab.last{border-right:1px solid #d0d0d0}
.addsheet{font:400 22px/27px "Noto Sans",sans-serif;color:#333;margin-left:6px}
.hscroll{margin-left:auto;padding:0 23px 0 0;height:27px;display:flex;align-items:center}
.bar{width:1px;height:12px;background:#666}
.tl-l{border:4px solid transparent;border-left:0;border-right:5px solid #666;margin-left:14px}
.hthumb{width:638px;height:11px;background:#d0d0d0;border-radius:6px;margin-left:10px}
.tl-r{border:4px solid transparent;border-right:0;border-left:5px solid #888;margin-left:48px}
.tl-r+.bar{margin-left:15px}

/* side */
.side{flex:1;border-left:1px solid #d0d0d0;display:flex;flex-direction:column;align-items:center;position:relative;padding-top:25px}
.sdash{width:15px;height:2px;background:#999;margin-bottom:14px}
.si{height:45px;display:flex;align-items:center;justify-content:center}
.dots{gap:2px}
.dots i{width:5px;height:5px;border:1px solid #666;border-radius:50%}
.gbar{position:absolute;right:4px;bottom:0;width:7px;height:71px;border-radius:4px;background:linear-gradient(#d8d8d8,#2fbf72 40%,#6ae39b)}

/* status */
.status{height:27px;display:flex;align-items:center;flex:none;border-top:1px solid #d6d6d6}
.st1{margin-left:17px}
.sep{width:1px;height:27px;background:#d6d6d6;margin-left:12px}
.st2{margin-left:14px}
.sright{margin-left:auto;display:flex;align-items:center;height:27px;padding-right:17px}
.cr{margin-left:19px}
.crc{margin-left:3px}
.sep2{margin-left:22px;margin-right:2px}
.vb{width:36px;height:27px;display:flex;align-items:center;justify-content:center}
.vb.act{background:#d5d5d5;width:27px;margin-right:4px;border-radius:3px}
.pctz{font:14px "Noto Sans",sans-serif;margin-left:27px}
.pch{margin-left:14px}
.zm,.zp{font:700 18px/1 "Noto Sans",sans-serif;color:#333}
.zm{margin-left:25px}
.zp{margin-left:18px}
.slider{position:relative;width:119px;height:1px;background:#bbb;margin-left:18px}
.sfill{position:absolute;left:0;top:-.5px;width:52px;height:2px;background:#2c5aa8}
.sknob{position:absolute;left:47px;top:-5px;width:11px;height:11px;border-radius:50%;background:#888;border:2px solid #f3f3f3}
.fs{margin-left:20px}

/* taskbar */
.taskbar{height:54px;background:#14273a;display:flex;align-items:center;flex:none;color:#eee;position:relative}
.stock{width:500px;display:flex;align-items:center;position:relative;padding-left:20px}
.sic{width:30px;height:30px;margin-top:8px}
.sbadge{position:absolute;left:34px;top:-1px;width:17px;height:17px;border-radius:50%;background:#f08a8a;color:#fff;font:11px/17px "Noto Sans",sans-serif;text-align:center}
.stxt{display:flex;flex-direction:column;margin-left:7px;font-size:14px;line-height:18px;color:#eee}
.pink{color:#c0708a;font-size:13px}
.winlogo{width:27px;height:27px;display:grid;grid-template-columns:13px 13px;gap:1px}
.winlogo i{background:linear-gradient(135deg,#5fdcf8,#1ea6e8)}
.search{margin-left:15px;width:245px;height:35px;border-radius:18px;background:#3a4b5c;display:flex;align-items:center;padding-left:11px;font-size:16px;color:#ddd}
.search span{margin-left:9px}
.rib{width:50px;height:36px;margin-left:auto;margin-right:5px}
.apps{display:flex;margin-left:3px}
.app{width:49.500px;height:54px;display:flex;align-items:center;justify-content:center;position:relative}
.app svg{width:28px;height:28px}
.pip::after{content:"";position:absolute;left:50%;margin-left:-3px;bottom:2px;width:6px;height:4px;border-radius:2px;background:#8a8f96}
.wps{background:#223446;border-radius:5px}
.wps i{position:absolute;left:15px;bottom:1px;width:18px;height:4px;border-radius:2px;background:#5fdcf0}
.tray{margin-left:auto;display:flex;align-items:center;padding-right:20px}
.tup{margin-right:20px}
.tr{width:20px;height:20px}
.mic{stroke:#6fd6e0;margin-left:19px;margin-right:16px}
.zh{font-size:16px;color:#fff;margin-right:23px}
.tr+.wifi{margin-left:23px}
.spk{margin-left:6px}
.bat{margin-left:8px;stroke:none}
.clock{display:flex;flex-direction:column;align-items:flex-end;margin-left:14px;font:14px/18px "Noto Sans",sans-serif;color:#e8e8e8}
.bell{margin-left:8px}

/* overlays */
.cursor{position:absolute;left:119px;top:650px;width:17px;height:17px}
.title{position:absolute;white-space:nowrap;font-family:"Noto Sans CJK SC",sans-serif;font-weight:700;transform-origin:0 0;paint-order:stroke fill}
.t-white{left:275px;top:204px;font-size:100px;line-height:100px;color:#fff;-webkit-text-stroke:14px #0a0a0f;transform:scaleY(1.29);text-shadow:2px 3px 0 #0a0a0f}
.t-yellow{left:265px;top:426px;font-size:137px;line-height:137px;color:#ffe82e;-webkit-text-stroke:20px #0a0a0f;transform:scaleY(1.4);text-shadow:3px 3px 0 #0a0a0f}
.subtitle{position:absolute;left:600px;top:889px;font-size:55px;line-height:80px;font-weight:500;letter-spacing:.4px;color:#8470e8;white-space:nowrap}
```
